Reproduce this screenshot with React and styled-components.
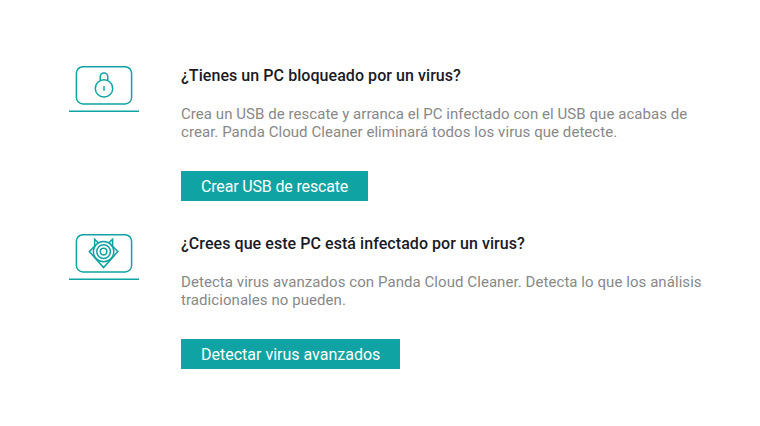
import React from "react";
import styled, { createGlobalStyle } from "styled-components";

const Global = createGlobalStyle`
  body { margin: 0; background: #fff; font-family: Roboto, sans-serif; }
`;
const Page = styled.main`
  display: flex; flex-direction: column; gap: 33px;
  box-sizing: border-box; width: 760px; height: 426px; padding: 66px 0 0 68px;
`;
const Option = styled.section`
  display: flex; gap: 41px; height: 135px;
`;
const Icon = styled.svg`
  flex: none; width: 72px; height: 48px;
  fill: none; stroke: #0fa3a3; stroke-width: 1.5;
`;
const Content = styled.div`
  display: flex; flex-direction: column; align-items: flex-start;
`;
const Title = styled.h2`
  margin: 0; font-size: 16px; line-height: 19px; font-weight: 500;
  letter-spacing: 0.06px; color: #1a1a26; white-space: nowrap;
`;
const Text = styled.p`
  margin: 20px 0 30px; font-size: 15px; line-height: 18px;
  letter-spacing: ${(p) => p.$tracking}px; color: #888; white-space: pre;
`;
const Button = styled.button`
  box-sizing: border-box; width: ${(p) => p.$width}px; height: 30px; padding: 1px 0 0 20px; border: 0;
  background: #0fa3a3; color: #fff; text-align: left;
  font: 400 16px/29px Roboto, sans-serif; letter-spacing: ${(p) => p.$tracking || 0}px; white-space: nowrap;
`;

function Laptop({ children }) {
  return (
    <Icon viewBox="0 0 72 48">
      <rect x="8.4" y="0.7" width="55.2" height="37.2" rx="6.5" />
      <path d="M1 45.2H71" />
      {children}
    </Icon>
  );
}

export default function App() {
  return (
    <>
      <Global />
      <Page>
        <Option>
          <Laptop>
            <circle cx="36" cy="22.4" r="8.7" />
            <path d="M32.2 14.4V10.7a3.8 3.8 0 0 1 7.6 0V14.4M36 20.2v4.5" />
          </Laptop>
          <Content>
            <Title>¿Tienes un PC bloqueado por un virus?</Title>
            <Text $tracking={0.055}>{"Crea un USB de rescate y arranca el PC infectado con el USB que acabas de\ncrear. Panda Cloud Cleaner eliminará todos los virus que detecte."}</Text>
            <Button $width={187} $tracking={-0.16}>Crear USB de rescate</Button>
          </Content>
        </Option>
        <Option>
          <Laptop>
            <circle cx="35.6" cy="17.6" r="3.3" />
            <circle cx="35.6" cy="17.6" r="6.8" />
            <circle cx="35.6" cy="17.6" r="10.2" />
            <path d="M30.4 8.9L26.6 5.2V12.2L21.3 17.6L35.6 33.6L49.9 17.6L44.6 12.2V5.2L40.8 8.9" />
          </Laptop>
          <Content>
            <Title>¿Crees que este PC está infectado por un virus?</Title>
            <Text $tracking={0.065}>{"Detecta virus avanzados con Panda Cloud Cleaner. Detecta lo que los análisis\ntradicionales no pueden."}</Text>
            <Button $width={219}>Detectar virus avanzados</Button>
          </Content>
        </Option>
      </Page>
    </>
  );
}
